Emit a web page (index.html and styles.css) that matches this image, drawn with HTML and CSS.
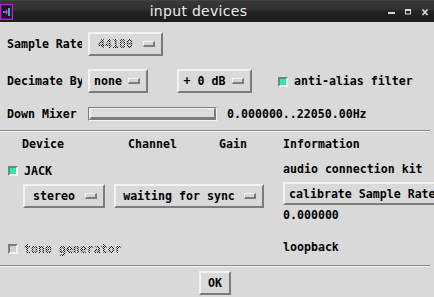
FILE: index.html
```html
<!DOCTYPE html>
<html>
<head>
<meta charset="utf-8">
<title>input devices</title>
<link rel="stylesheet" href="styles.css">
</head>
<body>
<div class="win">
  <div class="titlebar">
    <svg class="wicon" width="13" height="16" viewBox="0 0 13 16">
      <rect x="0.5" y="0.5" width="12" height="15" fill="#1a1a1a" stroke="#b020e0"/>
      <rect x="1.5" y="1.5" width="10" height="13" fill="none" stroke="#5a1070"/>
      <rect x="8" y="4" width="2" height="8" fill="#10c8b0"/>
      <path d="M3 7h3V5l2 3-2 3V9H3z" fill="#e030f0"/>
    </svg>
    <div class="title">input devices</div>
    <svg class="wbtns" width="50" height="22" viewBox="0 0 50 22">
      <rect x="4" y="12" width="7" height="2" fill="#d8d8d8"/>
      <rect x="21.5" y="9.5" width="5" height="4.5" fill="none" stroke="#d8d8d8"/>
      <rect x="21" y="9" width="6" height="2" fill="#d8d8d8"/>
      <path d="M38.5 9.5l5 5.5M43.5 9.5l-5 5.5" stroke="#d8d8d8" stroke-width="1.8"/>
    </svg>
  </div>

  <div class="row r1">
    <span class="label">Sample Rate</span>
    <span class="mbtn w75"><span class="mtext stip">44100</span><i class="ind"></i></span>
  </div>

  <div class="row r2">
    <span class="label">Decimate By</span>
    <span class="mbtn w60"><span class="mtext">none</span><i class="ind"></i></span>
    <span class="mbtn w75 gain"><span class="mtext">+ 0 dB</span><i class="ind"></i></span>
    <span class="check on aa"></span>
    <span class="txt">anti-alias filter</span>
  </div>

  <div class="row r3">
    <span class="label">Down Mixer</span>
    <span class="trough"><span class="slider"></span></span>
    <span class="range">0.000000..22050.00Hz</span>
  </div>

  <div class="sep s1"></div>

  <div class="devices">
    <div class="dleft">
      <div class="hdr"><span class="c-dev">Device</span><span class="c-ch">Channel</span><span>Gain</span></div>
      <div class="chkrow jack"><span class="check on"></span><span>JACK</span></div>
      <div class="btnrow">
        <span class="mbtn stereo"><span class="mtext">stereo</span><i class="ind"></i></span>
        <span class="mbtn sync"><span class="mtext">waiting for sync</span><i class="ind"></i></span>
      </div>
      <div class="chkrow tone"><span class="check"></span><span class="stip">tone generator</span></div>
    </div>
    <div class="dright">
      <div class="line info">Information</div>
      <div class="line kit">audio connection kit</div>
      <div class="pbtn calib">calibrate Sample Rate</div>
      <div class="line val">0.000000</div>
      <div class="line loop">loopback</div>
    </div>
  </div>

  <div class="sep s2"></div>

  <div class="okrow"><span class="pbtn ok">OK</span></div>
</div>
</body>
</html>
```

FILE: styles.css
```css
html, body {
  margin: 0;
  padding: 0;
}
body {
  width: 434px;
  height: 297px;
  overflow: hidden;
  background: #d9d9d9;
  font: bold 11.6px/14px "DejaVu Sans Mono", monospace;
  color: #000;
}
.win {
  width: 434px;
  height: 297px;
  overflow: hidden;
}
.titlebar {
  height: 22px;
  display: flex;
  align-items: center;
  background: linear-gradient(#4a4a4a 0, #383838 1px, #303030 10px, #232323 11px, #1c1c1c 100%);
  color: #ececec;
}
.wicon {
  display: block;
  flex: none;
  margin-top: 1px;
}
.title {
  flex: 1;
  text-align: center;
  font: 14px/22px "DejaVu Sans", sans-serif;
  letter-spacing: 0.3px;
}
.wbtns {
  display: block;
  flex: none;
}

.row {
  display: flex;
  align-items: center;
  white-space: nowrap;
}
.label {
  width: 75px;
  margin-left: 7px;
  margin-right: 6px;
  overflow: hidden;
  white-space: nowrap;
  flex: none;
}
.r1 {
  margin-top: 10px;
  height: 24px;
}
.r2 {
  margin-top: 12px;
  height: 25px;
}
.r3 {
  margin-top: 14px;
  height: 14px;
}

.mbtn {
  box-sizing: border-box;
  height: 24px;
  display: flex;
  align-items: center;
  border: 2px solid;
  border-color: #f2f2f2 #7c7c7c #7c7c7c #f2f2f2;
  background: #d9d9d9;
  padding: 0 6px 0 2px;
  flex: none;
  white-space: nowrap;
}
.mtext {
  flex: 1;
  text-align: center;
}
.ind {
  display: block;
  box-sizing: border-box;
  width: 12px;
  height: 6px;
  margin-left: 4px;
  border-style: solid;
  border-width: 1px 2px 2px 1px;
  border-color: #f4f4f4 #7c7c7c #7c7c7c #f4f4f4;
  background: #d4d4d4;
  flex: none;
}
.w75 { width: 75px; }
.w60 { width: 60px; }
.gain { margin-left: 29px; }

.check {
  box-sizing: border-box;
  width: 10px;
  height: 10px;
  border: 2px solid;
  border-color: #7c7c7c #f4f4f4 #f4f4f4 #7c7c7c;
  background: #cfcfcf;
  flex: none;
}
.check.on {
  background: #1fefb4;
}
.aa {
  margin-left: 26px;
  margin-right: 6px;
  margin-top: 2px;
}
.txt {
  margin-top: 1px;
}

.trough {
  box-sizing: border-box;
  width: 129px;
  height: 14px;
  border: 1px solid;
  border-color: #7c7c7c #f4f4f4 #f4f4f4 #7c7c7c;
  display: flex;
  flex: none;
}
.slider {
  flex: 1;
  box-sizing: border-box;
  border-style: solid;
  border-width: 1px 2px 3px 2px;
  border-color: #f2f2f2 #7c7c7c #7c7c7c #f2f2f2;
  background: #dcdcdc;
}
.range {
  margin-left: 10px;
}

.sep {
  width: 430px;
  height: 1px;
  background: #8a8a8a;
  border-bottom: 1px solid #f4f4f4;
}
.s1 { margin-top: 9px; }

.devices {
  display: flex;
  height: 133px;
}
.dleft {
  width: 283px;
  flex: none;
}
.dright {
  flex: 1;
  overflow: hidden;
  white-space: nowrap;
}
.hdr {
  margin-top: 5px;
  height: 14px;
  display: flex;
  padding-left: 22px;
}
.c-dev { width: 106px; }
.c-ch { width: 91px; }

.chkrow {
  display: flex;
  align-items: center;
  padding-left: 8px;
  gap: 6px;
}
.jack {
  margin-top: 12px;
  height: 15px;
}
.btnrow {
  margin-top: 6px;
  display: flex;
  padding-left: 23px;
  gap: 9px;
}
.stereo { width: 82px; }
.sync { width: 150px; }
.tone {
  margin-top: 34px;
  height: 14px;
}

.stip {
  color: transparent;
  background-image: repeating-conic-gradient(#000 0 25%, transparent 0 50%);
  background-size: 2px 2px;
  -webkit-background-clip: text;
  background-clip: text;
}

.line {
  height: 14px;
}
.info { margin-top: 5px; }
.kit { margin-top: 11px; }
.pbtn {
  box-sizing: border-box;
  height: 23px;
  border: 2px solid;
  border-color: #f2f2f2 #7c7c7c #7c7c7c #f2f2f2;
  background: #d9d9d9;
  display: flex;
  align-items: center;
  white-space: nowrap;
}
.calib {
  margin-top: 6px;
  width: 170px;
  padding-left: 4px;
}
.val { margin-top: 3px; }
.loop { margin-top: 18px; }

.okrow {
  margin-top: 4px;
  display: flex;
  justify-content: center;
  padding-right: 4px;
}
.ok {
  width: 32px;
  height: 24px;
  justify-content: center;
}
```
